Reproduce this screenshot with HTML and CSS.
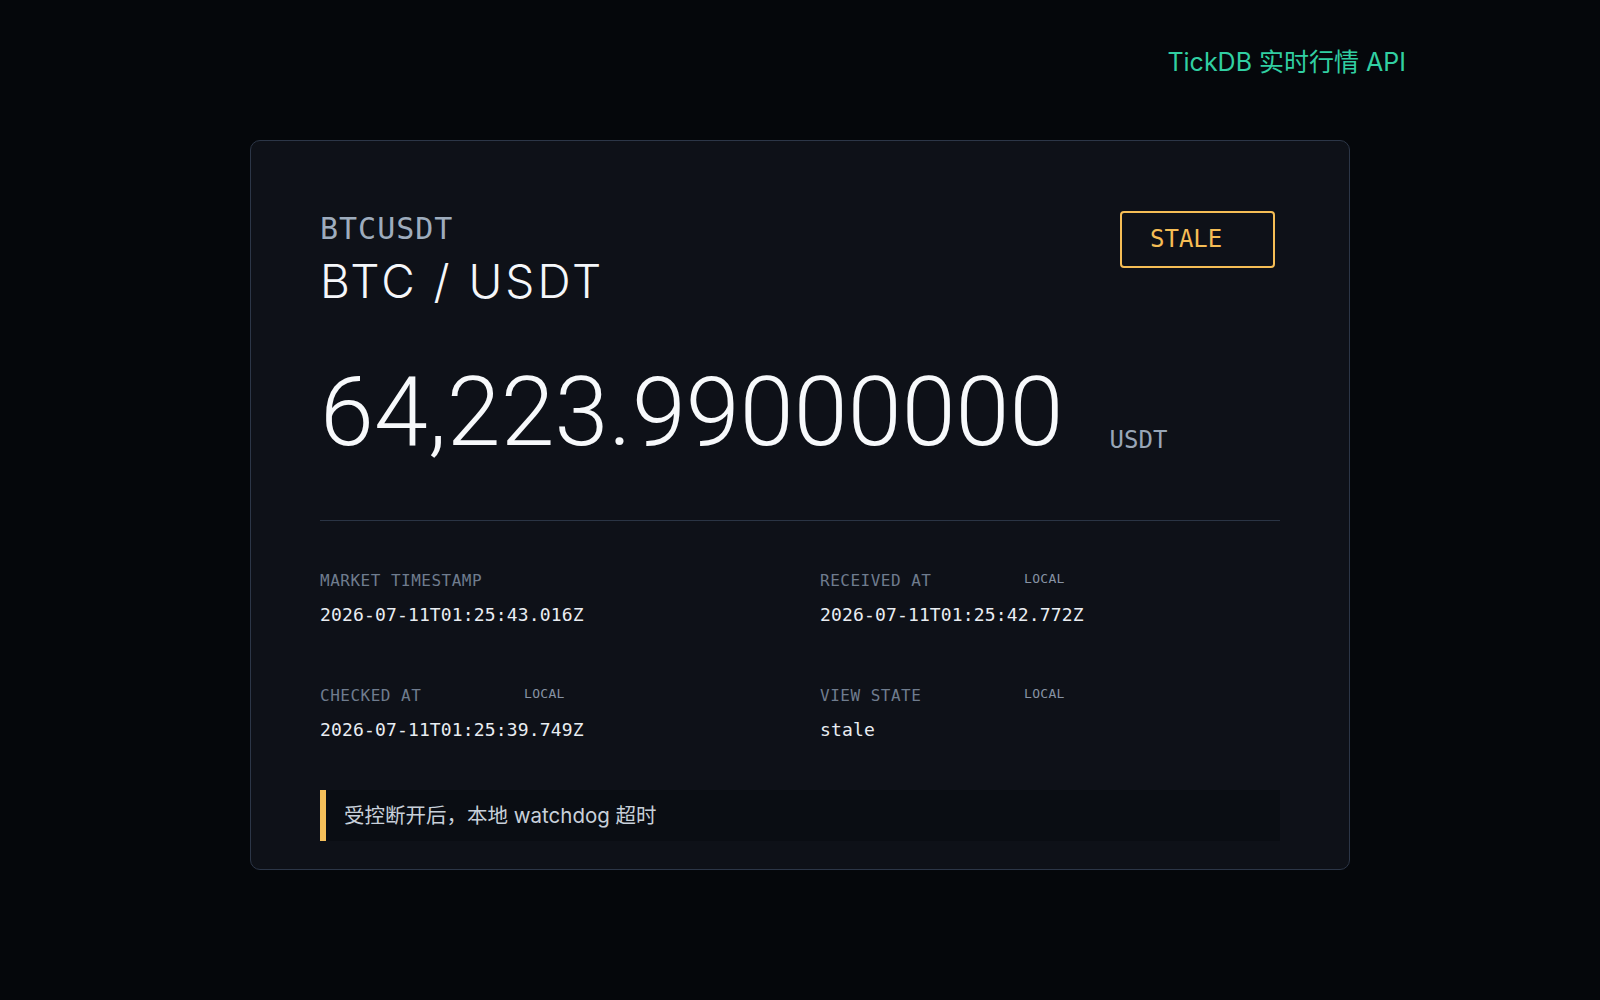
FILE: index.html
```html
<!DOCTYPE html>
<html lang="zh-CN">
<head>
  <meta charset="utf-8">
  <title>TickDB 实时行情 API</title>
  <link rel="stylesheet" href="styles.css">
</head>
<body>
  <header class="topbar">
    <span class="brand">TickDB 实时行情 API</span>
  </header>

  <main class="card">
    <div class="card-head">
      <div class="pair">
        <div class="symbol">BTCUSDT</div>
        <div class="pair-name">BTC / USDT</div>
      </div>
      <div class="badge">STALE</div>
    </div>

    <div class="price-row">
      <span class="price">64,223.99000000</span>
      <span class="quote">USDT</span>
    </div>

    <div class="divider"></div>

    <div class="meta">
      <div class="meta-item">
        <div class="meta-label"><span class="label-text">MARKET TIMESTAMP</span></div>
        <div class="meta-value">2026-07-11T01:25:43.016Z</div>
      </div>
      <div class="meta-item">
        <div class="meta-label"><span class="label-text">RECEIVED AT</span><span class="tag">LOCAL</span></div>
        <div class="meta-value">2026-07-11T01:25:42.772Z</div>
      </div>
      <div class="meta-item">
        <div class="meta-label"><span class="label-text">CHECKED AT</span><span class="tag">LOCAL</span></div>
        <div class="meta-value">2026-07-11T01:25:39.749Z</div>
      </div>
      <div class="meta-item">
        <div class="meta-label"><span class="label-text">VIEW STATE</span><span class="tag">LOCAL</span></div>
        <div class="meta-value">stale</div>
      </div>
    </div>

    <div class="note">受控断开后，本地 watchdog 超时</div>
  </main>
</body>
</html>
```

FILE: styles.css
```css
/* 页面底色与字体 */
body {
  margin: 0;
  background: #05070b;
  color: #f5f7fa;
  font-family: Inter, "Noto Sans CJK SC", sans-serif;
}

.topbar {
  display: flex;
  justify-content: flex-end;
  padding: 46px 194px 0 0;
}

.brand {
  font-size: 25px;
  line-height: 32px;
  color: #31cfa2;
}

/* 行情卡片 */
.card {
  width: 1100px;
  box-sizing: border-box;
  margin: 62px auto 0;
  padding: 70px 69px 28px;
  background: #0e1118;
  border: 1px solid #2c3647;
  border-radius: 10px;
}

.card-head {
  display: flex;
  justify-content: space-between;
  align-items: flex-start;
}

.symbol {
  font-family: "DejaVu Sans Mono", monospace;
  font-size: 30px;
  line-height: 36px;
  letter-spacing: 1px;
  color: #9eacbd;
}

.pair-name {
  margin-top: 9px;
  font-size: 46px;
  font-weight: 300;
  line-height: 50px;
  letter-spacing: 3px;
  color: #f5f7fa;
}

.badge {
  width: 155px;
  height: 57px;
  box-sizing: border-box;
  margin-right: 5px;
  padding-left: 28px;
  border: 2px solid #f5bd55;
  border-radius: 4px;
  font-family: "DejaVu Sans Mono", monospace;
  font-size: 24px;
  line-height: 53px;
  color: #f5bd55;
}

.price-row {
  display: flex;
  align-items: flex-end;
  gap: 46px;
  margin-top: 58px;
}

.price {
  font-family: Roboto, Inter, sans-serif;
  font-size: 97px;
  font-weight: 300;
  line-height: 96px;
  letter-spacing: 0.15px;
  color: #f7f9fb;
}

.quote {
  font-family: "DejaVu Sans Mono", monospace;
  font-size: 24px;
  line-height: 40px;
  color: #98a6b7;
}

.divider {
  height: 1px;
  margin-top: 60px;
  background: #2a3444;
}

/* 时间戳网格 */
.meta {
  display: grid;
  grid-template-columns: 1fr 1fr;
  column-gap: 40px;
  row-gap: 59px;
  margin-top: 50px;
}

.meta-label {
  display: flex;
  align-items: flex-start;
  font-family: "DejaVu Sans Mono", monospace;
  height: 20px;
}

.label-text {
  width: 204px;
  font-size: 16px;
  line-height: 20px;
  letter-spacing: 0.5px;
  color: #6f7c8e;
}

.tag {
  font-size: 13px;
  letter-spacing: 0.3px;
  color: #8793a4;
}

.meta-value {
  margin-top: 12px;
  font-family: "DejaVu Sans Mono", monospace;
  font-size: 18px;
  line-height: 24px;
  letter-spacing: 0.15px;
  color: #e9edf2;
}

.note {
  margin-top: 48px;
  padding: 0 18px;
  height: 51px;
  line-height: 51px;
  border-left: 6px solid #f5bf5a;
  background: #0a0d13;
  font-size: 20.5px;
  color: #c8d0da;
}
```
